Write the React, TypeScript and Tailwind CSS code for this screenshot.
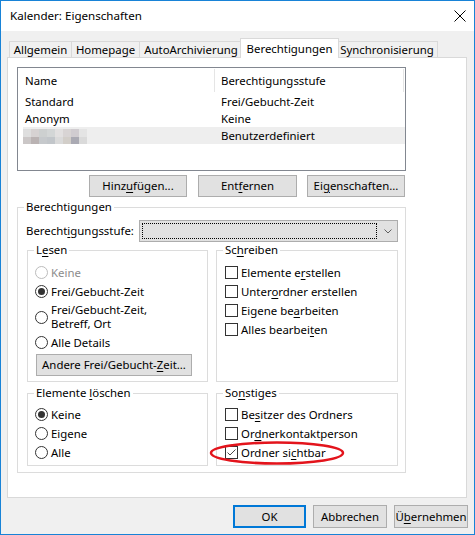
import React from "react";

function U({ children }: { children: React.ReactNode }) {
  return <span className="underline decoration-1 underline-offset-[2px]">{children}</span>;
}

function Btn({ className = "", children }: { className?: string; children: React.ReactNode }) {
  return (
    <div className={`flex items-center justify-center border border-[#adadad] bg-[#e1e1e1] ${className}`}>
      <span>{children}</span>
    </div>
  );
}

function Radio({ checked = false, disabled = false }: { checked?: boolean; disabled?: boolean }) {
  return (
    <span
      className={`flex h-[13px] w-[13px] shrink-0 items-center justify-center rounded-full border bg-white ${
        disabled ? "border-[#bcbcbc]" : "border-[#333333]"
      }`}
    >
      {checked && <span className="h-[7px] w-[7px] rounded-full bg-[#333333]" />}
    </span>
  );
}

function Check({ checked = false }: { checked?: boolean }) {
  return (
    <span className="flex h-[13px] w-[13px] shrink-0 items-center justify-center border border-[#333333] bg-white">
      {checked && (
        <svg width="11" height="11" viewBox="0 0 11 11">
          <path d="M1.5 5.5 L4 8 L9.5 2.5" fill="none" stroke="#4a4a4a" strokeWidth="1" />
        </svg>
      )}
    </span>
  );
}

function RadioRow({
  checked,
  disabled,
  children,
}: {
  checked?: boolean;
  disabled?: boolean;
  children: React.ReactNode;
}) {
  return (
    <div className="flex h-[19px] items-center gap-[3px]">
      <Radio checked={checked} disabled={disabled} />
      <span className={disabled ? "text-[#8c8c8c]" : ""}>{children}</span>
    </div>
  );
}

function CheckRow({ checked, children }: { checked?: boolean; children: React.ReactNode }) {
  return (
    <div className="flex h-[19px] items-center gap-[3px]">
      <Check checked={checked} />
      <span>{children}</span>
    </div>
  );
}

function Group({
  title,
  className = "",
  children,
}: {
  title: React.ReactNode;
  className?: string;
  children: React.ReactNode;
}) {
  return (
    <fieldset className={`border border-[#dcdcdc] ${className}`}>
      <legend className="ml-[6px] px-[2px] leading-[16px]">{title}</legend>
      {children}
    </fieldset>
  );
}

const blurTop = [
  "bg-[#dedede]",
  "bg-[#d6d2d2]",
  "bg-[#cdd0d0]",
  "bg-[#d3d6d6]",
  "bg-[#e2e0e0]",
  "bg-[#d8d4d4]",
  "bg-[#d0ccd0]",
  "bg-[#e4e4e4]",
];
const blurBottom = [
  "bg-[#cbc7c7]",
  "bg-[#bab3b3]",
  "bg-[#c6c9cc]",
  "bg-[#c2c6ca]",
  "bg-[#dadada]",
  "bg-[#d2cec9]",
  "bg-[#aaaab3]",
  "bg-[#dadada]",
];

function ListBox() {
  return (
    <div className="h-[104px] w-[389px] border border-[#828790] bg-white">
      <div className="flex h-[25px]">
        <div className="flex w-[196px] items-center pl-[7px]">Name</div>
        <div className="my-[1px] w-px bg-[#e5e5e5]" />
        <div className="flex w-[188px] items-center pl-[6px]">Berechtigungsstufe</div>
        <div className="my-[1px] w-px bg-[#e5e5e5]" />
      </div>
      <div className="ml-[5px]">
        <div className="flex h-[17px] items-center">
          <div className="w-[198px] pl-[2px]">Standard</div>
          <div>Frei/Gebucht-Zeit</div>
        </div>
        <div className="flex h-[17px] items-center">
          <div className="w-[198px] pl-[2px]">Anonym</div>
          <div>Keine</div>
        </div>
        <div className="flex h-[17px] items-center bg-[#eeeeee]">
          <div className="w-[198px]">
            <div className="flex flex-col pt-[1px]">
              <div className="flex">
                {blurTop.map((c, i) => (
                  <div key={i} className={`h-[8px] w-[8px] ${c}`} />
                ))}
              </div>
              <div className="flex">
                {blurBottom.map((c, i) => (
                  <div key={i} className={`h-[7px] w-[8px] ${c}`} />
                ))}
              </div>
            </div>
          </div>
          <div>Benutzerdefiniert</div>
        </div>
      </div>
    </div>
  );
}

export default function App() {
  return (
    <div className="h-[535px] w-[475px] overflow-hidden border border-[#1883d7] bg-[#f0f0f0] font-['Noto_Sans','DejaVu_Sans',sans-serif] text-[11.4px] leading-[16px] text-black">
      {/* Title bar */}
      <div className="flex h-[30px] items-center justify-between bg-white pl-[9px] pr-[8px]">
        <span className="text-[11.6px]">Kalender: Eigenschaften</span>
        <svg width="12" height="12" viewBox="0 0 12 12">
          <path d="M0.5 0.5 L11.5 11.5 M11.5 0.5 L0.5 11.5" stroke="#000" strokeWidth="1" />
        </svg>
      </div>

      <div className="pt-[7px]">
        {/* Tabs */}
        <div className="flex h-[19px] items-end pl-[8px]">
          <div className="flex h-[16px] w-[63px] items-center justify-center border-x border-t border-[#d9d9d9] bg-[#f0f0f0] pt-[1px]">
            Allgemein
          </div>
          <div className="-ml-px flex h-[16px] w-[69px] items-center justify-center border-x border-t border-[#d9d9d9] bg-[#f0f0f0] pt-[1px]">
            Homepage
          </div>
          <div className="-ml-px flex h-[16px] w-[104px] items-center justify-center border-x border-t border-[#d9d9d9] bg-[#f0f0f0] pt-[1px]">
            AutoArchivierung
          </div>
          <div className="relative z-10 -mb-px -ml-[3px] flex h-[20px] w-[99px] items-start justify-center border-x border-t border-[#d9d9d9] bg-white pt-[2px]">
            Berechtigungen
          </div>
          <div className="-ml-[3px] flex h-[16px] w-[102px] items-center justify-center border-x border-t border-[#d9d9d9] bg-[#f0f0f0] pt-[1px]">
            Synchronisierung
          </div>
        </div>

        {/* Panel */}
        <div className="ml-[6px] h-[441px] w-[460px] border border-[#d9d9d9] bg-white px-[9px] pt-[9px]">
          <ListBox />

          <div className="mt-[4px] flex h-[22px]">
            <Btn className="ml-[72px] w-[98px]">
              Hinz<U>u</U>fügen...
            </Btn>
            <Btn className="ml-[11px] w-[99px]">
              Ent<U>f</U>ernen
            </Btn>
            <Btn className="ml-[10px] w-[98px]">
              Ei<U>g</U>enschaften...
            </Btn>
          </div>

          <Group title="Berechtigungen" className="mt-[2px] h-[274px] w-[389px]">
            <div className="mt-[5px] flex h-[22px] items-center pl-[8px]">
              <div className="w-[113px] whitespace-nowrap">
                Berecht<U>i</U>gungsstufe:
              </div>
              <div className="flex h-[22px] w-[259px] items-center border border-[#adadad] bg-[#e1e1e1] pl-[2px]">
                <div className="h-[16px] w-[235px] border border-dotted border-black" />
                <div className="flex flex-1 items-center justify-center pl-[2px]">
                  <svg width="8" height="5" viewBox="0 0 8 5">
                    <path d="M0.5 0.5 L4 4 L7.5 0.5" fill="none" stroke="#606060" strokeWidth="1" />
                  </svg>
                </div>
              </div>
            </div>

            <div className="flex gap-[8px] pl-[9px]">
              <Group
                title={
                  <>
                    L<U>e</U>sen
                  </>
                }
                className="h-[140px] w-[181px]"
              >
                <div className="mt-[5px] pl-[7px]">
                  <RadioRow disabled>Keine</RadioRow>
                  <RadioRow checked>Frei/Gebucht-Zeit</RadioRow>
                  <div className="flex h-[32px] items-center gap-[3px]">
                    <Radio />
                    <div className="leading-[14px]">
                      Frei/Gebucht-Zeit,
                      <br />
                      Betreff, Ort
                    </div>
                  </div>
                  <RadioRow>Alle Details</RadioRow>
                  <Btn className="ml-[1px] mt-[2px] h-[22px] w-[156px]">
                    Andere Frei/Gebucht-<U>Z</U>eit...
                  </Btn>
                </div>
              </Group>

              <Group
                title={
                  <>
                    Sc<U>h</U>reiben
                  </>
                }
                className="h-[140px] w-[182px]"
              >
                <div className="mt-[5px] pl-[8px]">
                  <CheckRow>
                    Elemente e<U>r</U>stellen
                  </CheckRow>
                  <CheckRow>
                    Unter<U>o</U>rdner erstellen
                  </CheckRow>
                  <CheckRow>
                    Eigene be<U>a</U>rbeiten
                  </CheckRow>
                  <CheckRow>
                    Alles bearbei<U>t</U>en
                  </CheckRow>
                </div>
              </Group>
            </div>

            <div className="mt-[3px] flex gap-[8px] pl-[9px]">
              <Group
                title={
                  <>
                    Elemente <U>l</U>öschen
                  </>
                }
                className="h-[81px] w-[181px]"
              >
                <div className="mt-[4px] pl-[7px]">
                  <RadioRow checked>Keine</RadioRow>
                  <RadioRow>Eigene</RadioRow>
                  <RadioRow>Alle</RadioRow>
                </div>
              </Group>

              <Group
                title={
                  <>
                    So<U>n</U>stiges
                  </>
                }
                className="h-[81px] w-[182px]"
              >
                <div className="mt-[4px] pl-[8px]">
                  <CheckRow>
                    Be<U>s</U>itzer des Ordners
                  </CheckRow>
                  <CheckRow>
                    Or<U>d</U>nerkontaktperson
                  </CheckRow>
                  <div className="relative">
                    <CheckRow checked>
                      Ordner si<U>c</U>htbar
                    </CheckRow>
                    <svg
                      className="pointer-events-none absolute left-[-16px] top-[-2px]"
                      width="136"
                      height="24"
                      viewBox="0 0 136 24"
                    >
                      <ellipse
                        cx="68"
                        cy="12"
                        rx="66"
                        ry="10.5"
                        fill="none"
                        stroke="#e3141c"
                        strokeWidth="2.5"
                      />
                    </svg>
                  </div>
                </div>
              </Group>
            </div>
          </Group>
        </div>

        {/* Bottom buttons */}
        <div className="mt-[7px] flex justify-end gap-[7px] pr-[6px]">
          <div className="flex h-[23px] w-[73px] items-center justify-center border-2 border-[#0078d7] bg-[#e1e1e1]">
            OK
          </div>
          <Btn className="h-[23px] w-[74px]">Abbrechen</Btn>
          <Btn className="h-[23px] w-[74px]">
            Ü<U>b</U>ernehmen
          </Btn>
        </div>
      </div>
    </div>
  );
}
